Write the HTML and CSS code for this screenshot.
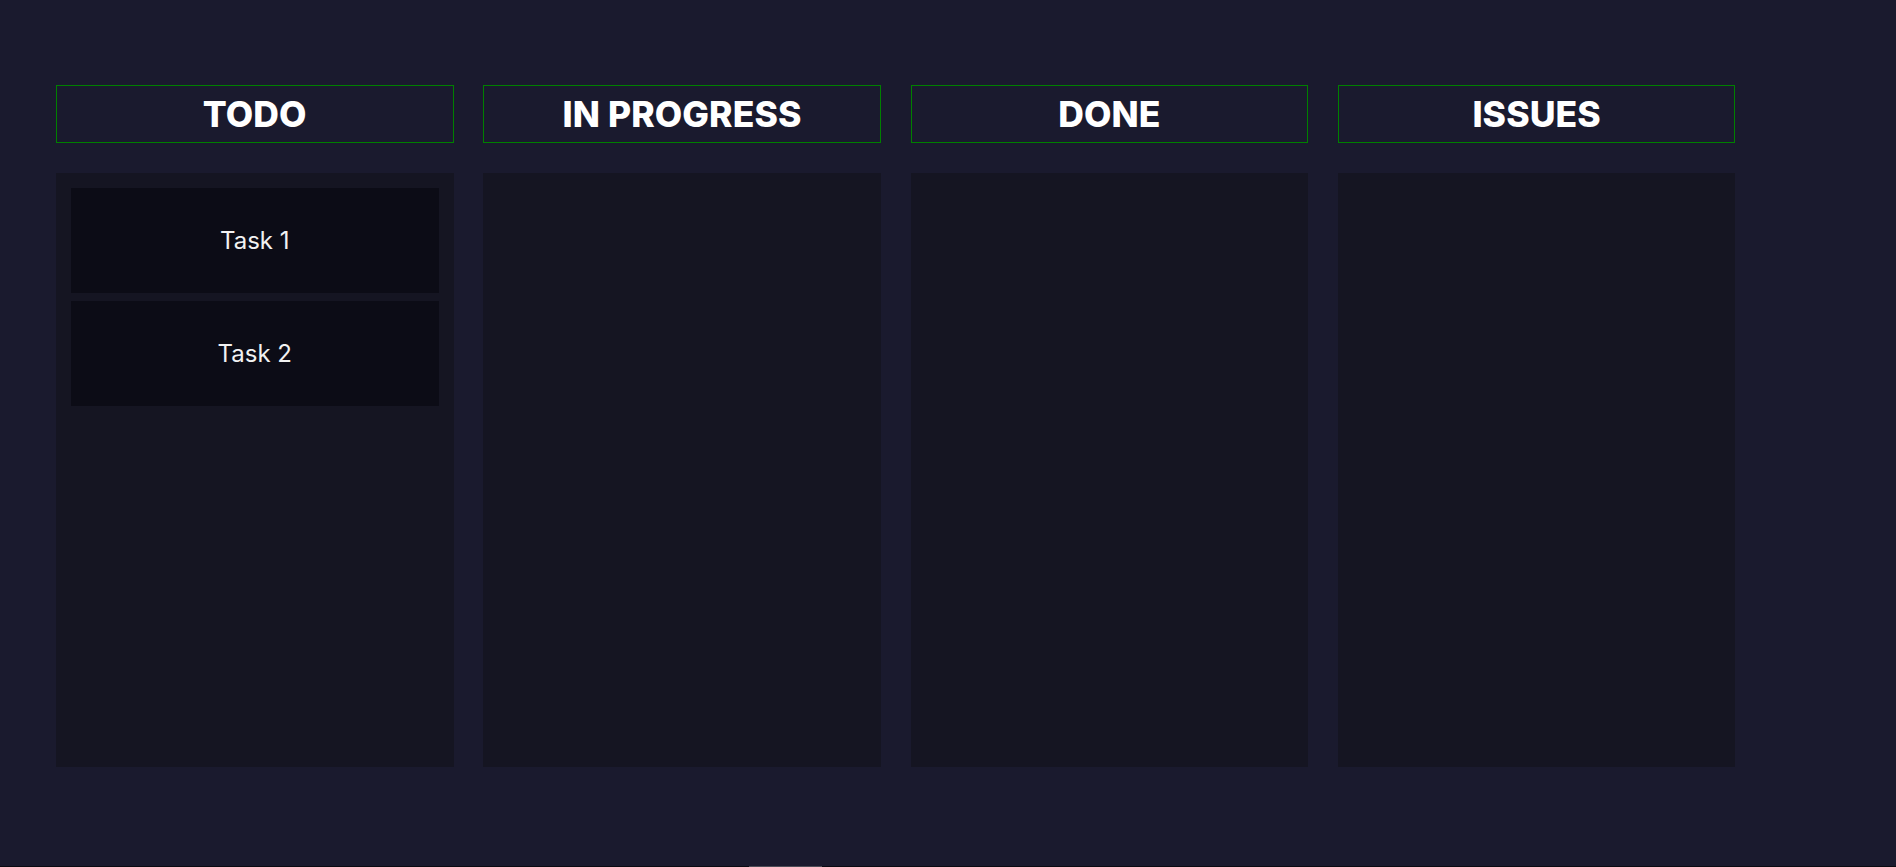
FILE: index.html
```html
<!DOCTYPE html>
<html lang="en">
<head>
<meta charset="utf-8">
<title>Kanban</title>
<link rel="stylesheet" href="styles.css">
</head>
<body>
<main class="board">
  <section class="column">
    <h2 class="column-title">TODO</h2>
    <div class="column-body">
      <div class="task">Task 1</div>
      <div class="task">Task 2</div>
    </div>
  </section>
  <section class="column">
    <h2 class="column-title">IN PROGRESS</h2>
    <div class="column-body"></div>
  </section>
  <section class="column">
    <h2 class="column-title">DONE</h2>
    <div class="column-body"></div>
  </section>
  <section class="column">
    <h2 class="column-title">ISSUES</h2>
    <div class="column-body"></div>
  </section>
</main>
<div class="hscroll"><div class="hscroll-thumb"></div></div>
</body>
</html>
```
FILE: styles.css
```css
html, body {
  margin: 0;
  padding: 0;
  background: #1a1a2e;
  height: 100%;
  overflow: hidden;
}
body {
  font-family: Inter, "Open Sans", sans-serif;
  color: #ffffff;
}
.board {
  display: flex;
  gap: 29.8px;
  padding: 85px 0 0 56px;
}
.column {
  width: 397.5px;
  display: flex;
  flex-direction: column;
}
.column-title {
  margin: 0;
  box-sizing: border-box;
  height: 57.5px;
  padding-top: 2px;
  border: 1px solid #008000;
  display: flex;
  align-items: center;
  justify-content: center;
  font-size: 35.5px;
  font-weight: 800;
  letter-spacing: 0.1px;
  color: #ffffff;
}
.column-body {
  margin-top: 30.5px;
  height: 594px;
  background: #151522;
  padding: 15px;
  box-sizing: border-box;
  display: flex;
  flex-direction: column;
  gap: 8px;
}
.task {
  height: 105px;
  background: #0c0c16;
  display: flex;
  align-items: center;
  justify-content: center;
  font-size: 24px;
  font-weight: 400;
  color: #f2f2f2;
}
.hscroll {
  position: fixed;
  left: 0;
  right: 0;
  bottom: 0;
  height: 1px;
  background: #0a0a12;
}
.hscroll-thumb {
  position: absolute;
  left: 749px;
  width: 73px;
  height: 1px;
  background: #4d4d57;
}
```
